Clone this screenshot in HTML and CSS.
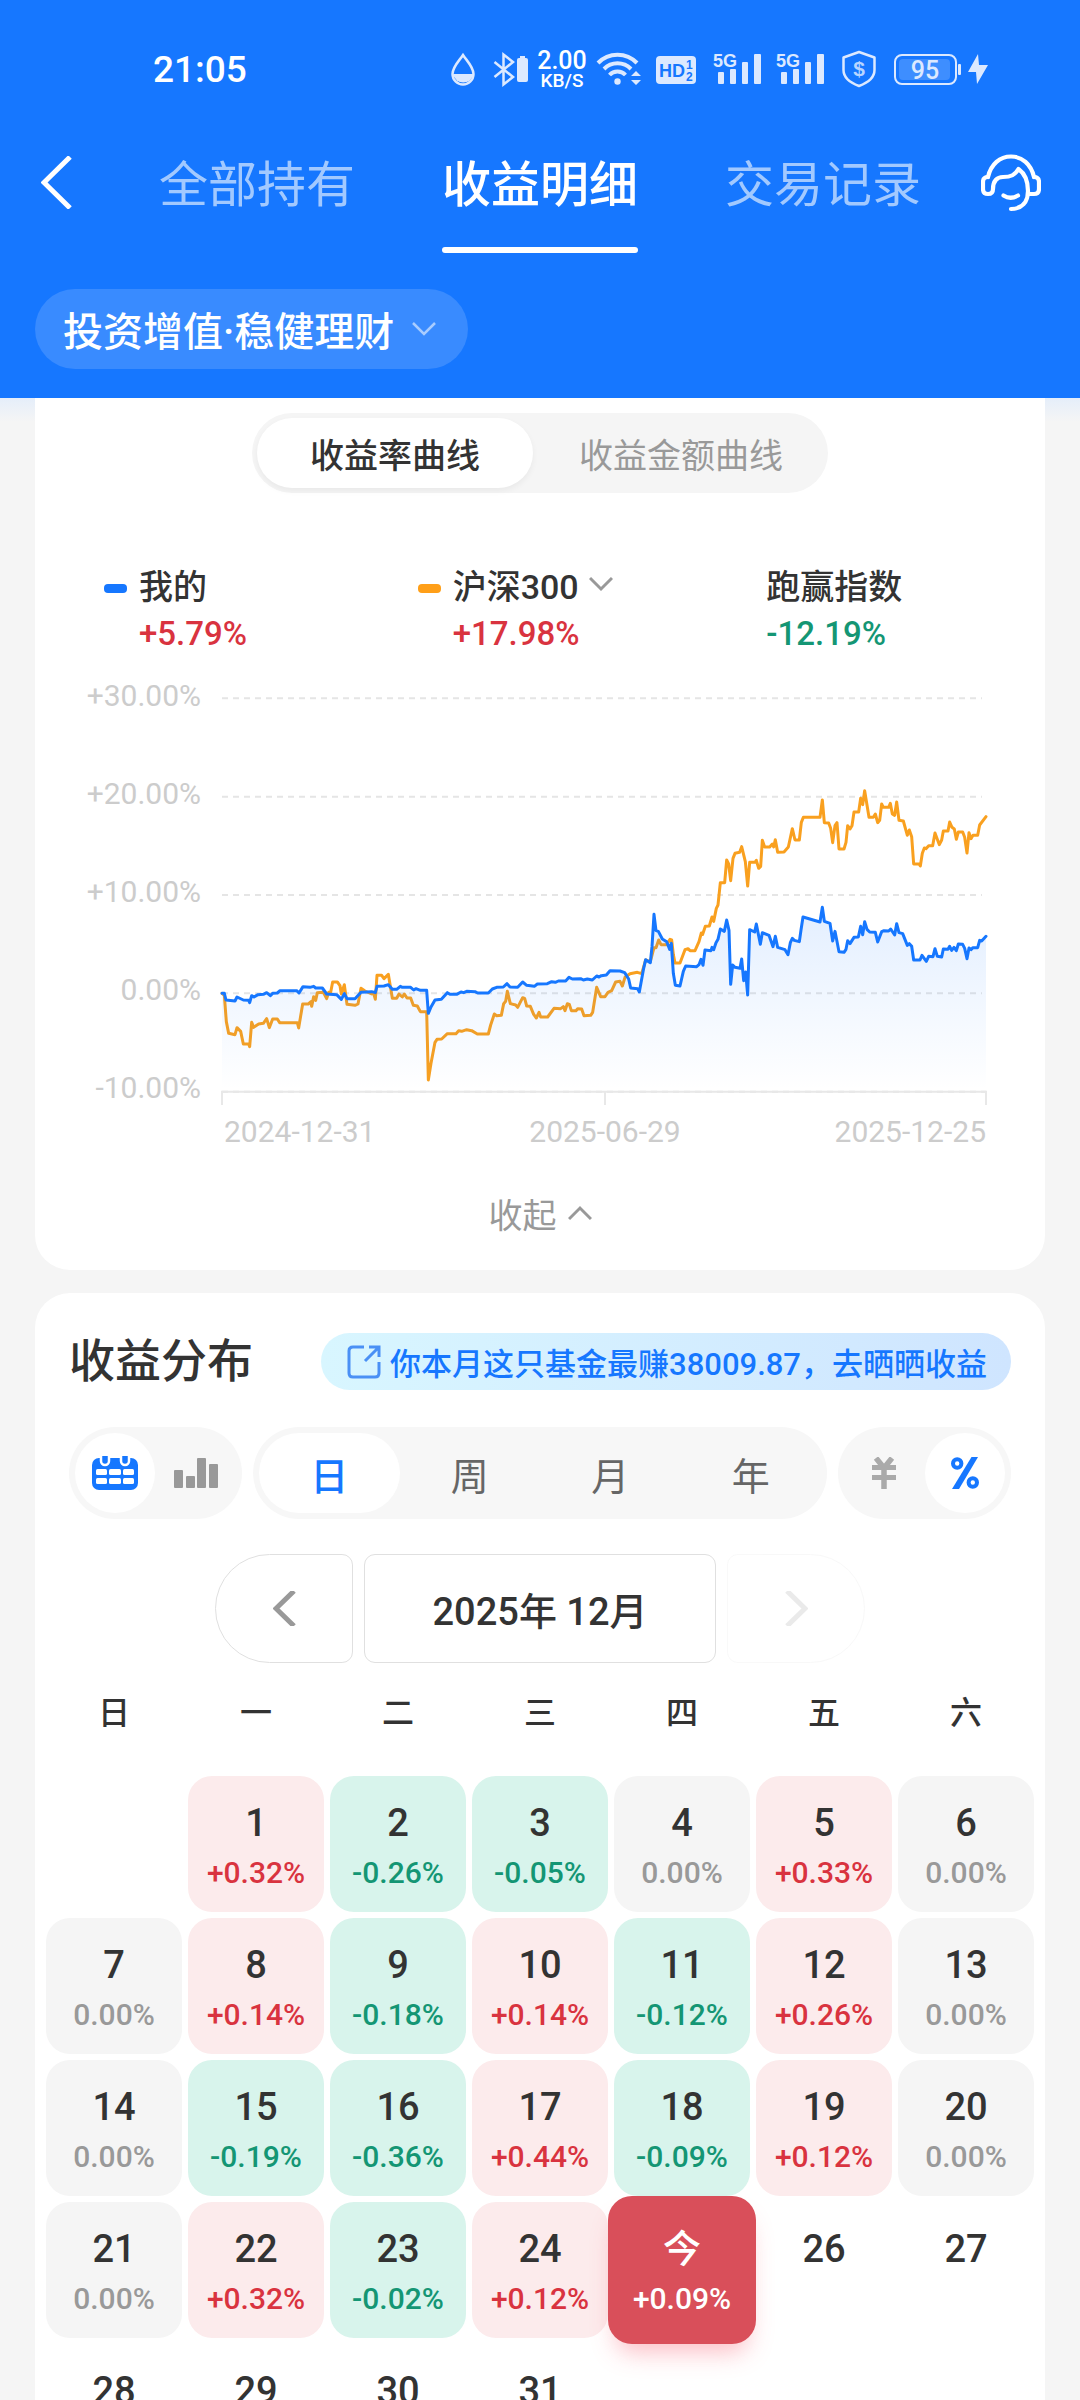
FILE: index.html
```html
<!DOCTYPE html>
<html lang="zh-CN">
<head>
  <meta charset="UTF-8">
  <title>收益明细</title>
  <meta name="viewport" content="width=device-width, initial-scale=1.0">
  <link rel="stylesheet" href="styles.css">
</head>
<body>
  <header class="header">
    <div class="status-bar">
      <span class="status-time">21:05</span>
      <div class="status-icons">
        <svg width="42" height="40" viewBox="0 0 42 40">
          <path d="M15 5C11 11 4.500 17 4.500 24a10.500 10.500 0 0 0 21 0C25.500 17 19 11 15 5z" fill="none" stroke="#dce9ff" stroke-width="2.500"/>
          <path d="M5 24h20.500a10.500 11 0 0 1-20.500 0z" fill="#dce9ff"/>
        </svg>
        <svg width="42" height="40" viewBox="0 0 42 40">
          <path d="M4.500 12l18.500 15-9.500 7.500V4.500L23 12 4.500 27" fill="none" stroke="#dce9ff" stroke-width="2.500"/>
          <rect x="27" y="8" width="11" height="24" rx="2" fill="#dce9ff"/>
          <rect x="30" y="6" width="5" height="2" fill="#dce9ff"/>
        </svg>
        <span class="net-speed"><b>2.00</b><small>KB/S</small></span>
        <svg width="56" height="40" viewBox="0 0 56 40">
          <g fill="none" stroke="#dce9ff" stroke-width="4">
            <path d="M6 13a27 27 0 0 1 39 0"/>
            <path d="M12 19a19 19 0 0 1 27 0"/>
            <path d="M17.500 25a11 11 0 0 1 16 0"/>
          </g>
          <circle cx="25.500" cy="31.500" r="3.200" fill="#dce9ff"/>
          <path d="M39 26l5-5 5 5zM39 30l5 5 5-5z" fill="#dce9ff"/>
        </svg>
        <svg width="57" height="40" viewBox="0 0 57 40">
          <rect x="8" y="6" width="40" height="28" rx="4" fill="#dce9ff"/>
          <g class="glyph" fill="#1677ff">
            <text x="11" y="27" font-size="18">HD</text>
            <text x="38" y="19" font-size="12">1</text>
            <text x="38" y="31" font-size="12">2</text>
          </g>
        </svg>
        <svg width="63" height="40" viewBox="0 0 63 40" fill="#dce9ff">
          <text class="glyph" x="8" y="17" font-size="18">5G</text>
          <rect x="13" y="22" width="6" height="12" rx="1"/>
          <rect x="25" y="19" width="6" height="15" rx="1"/>
          <rect x="37" y="12" width="6" height="22" rx="1"/>
          <rect x="49" y="4" width="7" height="30" rx="1"/>
        </svg>
        <svg width="63" height="40" viewBox="0 0 63 40" fill="#dce9ff">
          <text class="glyph" x="8" y="17" font-size="18">5G</text>
          <rect x="13" y="22" width="6" height="12" rx="1"/>
          <rect x="25" y="19" width="6" height="15" rx="1"/>
          <rect x="37" y="12" width="6" height="22" rx="1"/>
          <rect x="49" y="4" width="7" height="30" rx="1"/>
        </svg>
        <svg width="54" height="40" viewBox="0 0 54 40">
          <path d="M28 2l15.500 5.500V20c0 8-6 12.500-15.500 16C18.500 32.500 12.500 28 12.500 20V7.500z" fill="none" stroke="#dce9ff" stroke-width="2.500" stroke-linejoin="round"/>
          <text class="glyph" x="28" y="26" font-size="21" text-anchor="middle" fill="#b8d5ff">$</text>
        </svg>
        <svg width="106" height="40" viewBox="0 0 106 40">
          <rect x="10" y="5" width="61" height="29" rx="7" fill="none" stroke="#dce9ff" stroke-width="2"/>
          <rect x="14" y="9" width="51" height="21" rx="4" fill="#3e8eff"/>
          <rect x="73" y="14" width="3" height="11" rx="1" fill="#dce9ff"/>
          <text x="40" y="29" font-size="25" font-weight="500" text-anchor="middle" fill="#dce9ff">95</text>
          <path d="M93 4L83 22h8l1 12 11-19h-9z" fill="#dce9ff"/>
        </svg>
      </div>
    </div>

    <div class="nav-bar">
      <button class="icon-btn" aria-label="返回">
        <svg width="31" height="53" viewBox="0 0 31 53"><path d="M29 1L3 26.500 29 52" fill="none" stroke="#fff" stroke-width="5"/></svg>
      </button>
      <nav class="tabs">
        <a class="tab" href="#hold">全部持有</a>
        <a class="tab active" href="#detail">收益明细</a>
        <a class="tab" href="#record">交易记录</a>
      </nav>
      <button class="icon-btn" aria-label="客服">
        <svg width="60" height="58" viewBox="0 0 60 58" fill="none" stroke="#fff" stroke-width="4.200" stroke-linecap="round" stroke-linejoin="round">
          <path d="M7 23C10 10 19 2.500 30 2.500S50 10 53 23"/>
          <path d="M7 23q-5 0-5 5v7q0 5 5 5t5-5c0-8 4-12 10-12 8 0 12-2 15.500-8 7 5 9.500 12 9.500 22 0 11-6 18-17 18"/>
          <path d="M53 23q5 0 5 5v7q0 5-5 5h-6"/>
          <path d="M22.500 41.500q7 4.500 14.500 0"/>
        </svg>
      </button>
    </div>

    <button class="fund-select">
      <span>投资增值·稳健理财</span>
      <svg width="24" height="16" viewBox="0 0 24 16"><path d="M1 2l11 11L23 2" fill="none" stroke="#a8ccff" stroke-width="2.500"/></svg>
    </button>
  </header>

  <main class="content">
    <section class="card chart-card">
      <div class="curve-switch">
        <button class="curve-btn active" aria-pressed="true">收益率曲线</button>
        <button class="curve-btn" aria-pressed="false">收益金额曲线</button>
      </div>

      <div class="legend">
        <div class="legend-item">
          <div class="legend-name"><i class="mark mine"></i>我的</div>
          <div class="legend-value up">+5.79%</div>
        </div>
        <div class="legend-item">
          <button class="legend-name"><i class="mark index"></i>沪深300
            <svg width="24" height="16" viewBox="0 0 24 16"><path d="M1 2l11 11L23 2" fill="none" stroke="#999" stroke-width="3"/></svg>
          </button>
          <div class="legend-value up">+17.98%</div>
        </div>
        <div class="legend-item">
          <div class="legend-name no-mark">跑赢指数</div>
          <div class="legend-value down">-12.19%</div>
        </div>
      </div>

      <div class="chart">
        <div class="y-axis">
          <span>+30.00%</span>
          <span>+20.00%</span>
          <span>+10.00%</span>
          <span>0.00%</span>
          <span>-10.00%</span>
        </div>
        <svg class="plot" viewBox="66 -189 2292 1224" preserveAspectRatio="none">
          <defs>
            <linearGradient id="fade" gradientUnits="userSpaceOnUse" x1="0" y1="440" x2="0" y2="990">
              <stop offset="0" stop-color="#1677ff" stop-opacity=".12"/>
              <stop offset="1" stop-color="#1677ff" stop-opacity="0"/>
            </linearGradient>
          </defs>
          <g class="grid">
            <path d="M66-185H2346M66 110H2346M66 405H2346M66 700H2346M66 995H2358"/>
          </g>
          <path class="axis" d="M66 1035V995H2358V1035M1215 995V1035"/>
          <!-- 沪深300 -->
          <polyline class="line index" points="66,700 73,706 79,785 86,820 105,824 111,803 122,814 130,852 146,852 149,860 155,787 161,802 176,792 190,790 200,776 208,803 218,777 232,777 239,788 292,788 296,804 308,732 325,732 333,725 335,739 341,710 347,721 352,698 370,697 380,716 386,697 392,697 398,666 412,666 420,677 424,702 433,674 441,733 465,736 474,732 483,685 495,693 515,702 520,697 526,718 531,646 545,646 552,656 565,643 577,715 590,715 597,702 607,711 613,702 621,714 632,714 640,736 652,738 661,755 680,755 685,960 693,910 705,847 711,838 725,837 742,821 768,821 776,812 785,814 800,809 815,812 832,822 865,822 872,795 883,762 890,767 904,766 911,731 917,724 922,694 931,731 947,735 953,742 968,713 974,715 980,738 991,739 1001,763 1009,774 1017,757 1022,771 1043,771 1062,745 1082,746 1090,740 1095,752 1102,731 1108,733 1114,752 1128,752 1133,746 1145,747 1152,767 1172,766 1178,757 1190,682 1202,710 1215,710 1224,697 1235,692 1247,666 1260,664 1267,678 1275,652 1290,641 1312,637 1325,641 1337,600 1351,605 1362,563 1368,563 1376,540 1383,554 1400,554 1410,538 1415,540 1420,583 1425,609 1440,609 1455,569 1464,566 1470,572 1485,572 1497,545 1504,519 1508,523 1516,499 1528,498 1536,471 1541,484 1549,445 1554,435 1561,368 1574,368 1580,300 1586,312 1592,362 1599,295 1605,280 1619,277 1625,260 1636,305 1643,378 1649,307 1665,307 1669,301 1676,325 1682,319 1687,241 1694,261 1709,261 1717,252 1721,261 1726,239 1733,277 1752,276 1765,261 1777,206 1785,240 1798,240 1804,187 1810,172 1860,172 1867,120 1873,188 1886,189 1892,205 1898,248 1905,197 1911,188 1917,267 1932,267 1938,247 1943,197 1950,207 1956,197 1962,156 1976,156 1982,115 1988,134 1994,92 2007,172 2020,172 2026,162 2033,188 2039,181 2045,132 2050,142 2066,142 2071,130 2077,162 2084,166 2090,126 2097,181 2110,183 2122,226 2128,210 2135,230 2141,312 2157,312 2161,318 2167,280 2173,264 2178,266 2186,257 2198,257 2205,219 2218,254 2225,240 2230,213 2244,213 2249,186 2256,202 2263,207 2269,238 2275,216 2288,216 2294,232 2301,279 2307,218 2313,236 2319,226 2333,226 2339,195 2358,170"/>
          <!-- 我的 -->
          <path class="area" d="M66 990L66,700 73,700 78,720 105,723 111,711 130,720 146,721 149,728 155,707 162,711 174,704 190,703 200,698 211,707 218,700 232,699 240,692 290,692 297,699 309,680 330,682 341,679 347,684 367,684 380,702 410,704 424,718 433,701 441,716 465,716 483,697 515,695 526,698 531,679 552,678 565,674 577,688 590,688 601,679 607,682 632,682 641,690 648,686 661,691 680,691 685,760 693,741 705,720 724,718 742,698 750,703 770,703 783,696 791,698 800,694 825,695 833,699 865,699 877,687 890,682 910,681 921,671 930,681 953,682 968,666 980,676 1003,679 1012,672 1042,671 1055,665 1066,667 1075,663 1097,663 1107,652 1117,657 1142,656 1150,660 1162,657 1177,660 1190,648 1197,651 1204,647 1219,645 1230,632 1260,633 1274,638 1286,657 1292,684 1313,686 1318,696 1331,625 1337,599 1351,608 1356,560 1362,463 1368,512 1375,514 1387,537 1400,545 1409,568 1414,550 1420,640 1426,676 1440,678 1450,634 1457,618 1490,620 1497,614 1503,598 1509,616 1515,570 1533,572 1536,562 1541,569 1548,548 1554,538 1561,507 1573,514 1580,480 1587,511 1592,673 1598,615 1605,622 1620,625 1625,597 1631,662 1637,636 1643,705 1649,509 1664,516 1669,492 1681,553 1687,518 1707,526 1719,560 1726,529 1733,562 1755,569 1764,584 1771,548 1777,535 1783,541 1798,545 1803,510 1809,471 1860,486 1867,442 1873,484 1890,490 1898,543 1905,514 1917,575 1932,577 1938,568 1943,542 1950,551 1962,532 1975,531 1982,499 1988,524 1994,485 2001,508 2009,516 2026,517 2033,546 2045,515 2052,512 2066,513 2072,507 2084,525 2090,491 2097,518 2108,521 2122,556 2128,551 2135,559 2141,600 2160,600 2166,586 2179,604 2186,589 2199,590 2205,566 2212,589 2225,591 2230,567 2244,568 2249,559 2255,571 2262,562 2269,572 2275,552 2288,553 2294,565 2301,596 2307,564 2313,569 2319,563 2333,563 2339,541 2345,543 2358,529V990z"/>
          <polyline class="line mine" points="66,700 73,700 78,720 105,723 111,711 130,720 146,721 149,728 155,707 162,711 174,704 190,703 200,698 211,707 218,700 232,699 240,692 290,692 297,699 309,680 330,682 341,679 347,684 367,684 380,702 410,704 424,718 433,701 441,716 465,716 483,697 515,695 526,698 531,679 552,678 565,674 577,688 590,688 601,679 607,682 632,682 641,690 648,686 661,691 680,691 685,760 693,741 705,720 724,718 742,698 750,703 770,703 783,696 791,698 800,694 825,695 833,699 865,699 877,687 890,682 910,681 921,671 930,681 953,682 968,666 980,676 1003,679 1012,672 1042,671 1055,665 1066,667 1075,663 1097,663 1107,652 1117,657 1142,656 1150,660 1162,657 1177,660 1190,648 1197,651 1204,647 1219,645 1230,632 1260,633 1274,638 1286,657 1292,684 1313,686 1318,696 1331,625 1337,599 1351,608 1356,560 1362,463 1368,512 1375,514 1387,537 1400,545 1409,568 1414,550 1420,640 1426,676 1440,678 1450,634 1457,618 1490,620 1497,614 1503,598 1509,616 1515,570 1533,572 1536,562 1541,569 1548,548 1554,538 1561,507 1573,514 1580,480 1587,511 1592,673 1598,615 1605,622 1620,625 1625,597 1631,662 1637,636 1643,705 1649,509 1664,516 1669,492 1681,553 1687,518 1707,526 1719,560 1726,529 1733,562 1755,569 1764,584 1771,548 1777,535 1783,541 1798,545 1803,510 1809,471 1860,486 1867,442 1873,484 1890,490 1898,543 1905,514 1917,575 1932,577 1938,568 1943,542 1950,551 1962,532 1975,531 1982,499 1988,524 1994,485 2001,508 2009,516 2026,517 2033,546 2045,515 2052,512 2066,513 2072,507 2084,525 2090,491 2097,518 2108,521 2122,556 2128,551 2135,559 2141,600 2160,600 2166,586 2179,604 2186,589 2199,590 2205,566 2212,589 2225,591 2230,567 2244,568 2249,559 2255,571 2262,562 2269,572 2275,552 2288,553 2294,565 2301,596 2307,564 2313,569 2319,563 2333,563 2339,541 2345,543 2358,529"/>
        </svg>
      </div>
      <div class="x-axis">
        <span>2024-12-31</span>
        <span>2025-06-29</span>
        <span>2025-12-25</span>
      </div>

      <button class="fold-btn">收起
        <svg width="24" height="16" viewBox="0 0 24 16"><path d="M1 14L12 3l11 11" fill="none" stroke="#999" stroke-width="3"/></svg>
      </button>
    </section>

    <section class="card">
      <div class="card-head">
        <h2>收益分布</h2>
        <a class="share" href="#share">
          <svg width="34" height="34" viewBox="0 0 34 34" fill="none" stroke="#4a90f5" stroke-width="3">
            <path d="M17 2H6Q2 2 2 6v22q0 4 4 4h22q4 0 4-4V17"/>
            <path d="M22 2h10v10M32 2L18 16"/>
          </svg>
          <span>你本月这只基金最赚38009.87，去晒晒收益</span>
        </a>
      </div>

      <div class="filters">
        <div class="seg">
          <button class="seg-btn round active" aria-label="日历" aria-pressed="true">
            <svg width="46" height="34" viewBox="0 0 46 34">
              <rect x="0" y="2" width="46" height="32" rx="7" fill="#1677ff"/>
              <path d="M9 0v5a4 4 0 0 0 8 0V0M29 0v5a4 4 0 0 0 8 0V0" fill="#1677ff" stroke="#fff" stroke-width="2.500"/>
              <g fill="#fff">
                <rect x="4" y="13" width="11" height="6" rx="1.500"/><rect x="17" y="13" width="12" height="6" rx="1.500"/><rect x="31" y="13" width="11" height="6" rx="1.500"/>
                <rect x="4" y="22" width="11" height="6" rx="1.500"/><rect x="17" y="22" width="12" height="6" rx="1.500"/><rect x="31" y="22" width="11" height="6" rx="1.500"/>
              </g>
            </svg>
          </button>
          <button class="seg-btn round" aria-label="柱状图" aria-pressed="false">
            <svg width="44" height="30" viewBox="0 0 44 30" fill="#999">
              <rect x="0" y="12" width="9" height="18" rx="1"/><rect x="12" y="18" width="9" height="12" rx="1"/><rect x="23" y="0" width="9" height="30" rx="1"/><rect x="35" y="6" width="9" height="24" rx="1"/>
            </svg>
          </button>
        </div>
        <div class="seg period">
          <button class="seg-btn active" aria-pressed="true">日</button>
          <button class="seg-btn" aria-pressed="false">周</button>
          <button class="seg-btn" aria-pressed="false">月</button>
          <button class="seg-btn" aria-pressed="false">年</button>
        </div>
        <div class="seg">
          <button class="seg-btn round" aria-label="金额" aria-pressed="false">
            <svg width="24" height="32" viewBox="0 0 24 32" fill="none" stroke="#aaa">
              <path d="M4 1l8 10 8-10M12 10v22" stroke-width="5.500"/>
              <path d="M0 10.500h24M0 20.500h24" stroke-width="5"/>
            </svg>
          </button>
          <button class="seg-btn round active" aria-label="收益率" aria-pressed="true">
            <svg width="28" height="32" viewBox="0 0 28 32" fill="none" stroke="#1677ff">
              <circle cx="6.200" cy="6.500" r="4.200" stroke-width="4"/>
              <circle cx="21.800" cy="25.500" r="4.200" stroke-width="4"/>
              <path d="M20.500 0H27L8 32H1z" fill="#1677ff" stroke="none"/>
            </svg>
          </button>
        </div>
      </div>

      <div class="month-nav">
        <button class="month-btn prev" aria-label="上个月">
          <svg width="23" height="35" viewBox="0 0 23 35"><path d="M21 0L3 17.500 21 35" fill="none" stroke="#999" stroke-width="5"/></svg>
        </button>
        <button class="month-btn current">2025年 12月</button>
        <button class="month-btn next" aria-label="下个月" disabled>
          <svg width="23" height="35" viewBox="0 0 23 35"><path d="M2 0l18 17.500L2 35" fill="none" stroke="#999" stroke-width="5"/></svg>
        </button>
      </div>

      <table class="calendar">
        <thead>
          <tr><th>日</th><th>一</th><th>二</th><th>三</th><th>四</th><th>五</th><th>六</th></tr>
        </thead>
        <tbody>
          <tr>
            <td></td>
            <td><div class="day up"><b>1</b><span>+0.32%</span></div></td>
            <td><div class="day down"><b>2</b><span>-0.26%</span></div></td>
            <td><div class="day down"><b>3</b><span>-0.05%</span></div></td>
            <td><div class="day flat"><b>4</b><span>0.00%</span></div></td>
            <td><div class="day up"><b>5</b><span>+0.33%</span></div></td>
            <td><div class="day flat"><b>6</b><span>0.00%</span></div></td>
          </tr>
          <tr>
            <td><div class="day flat"><b>7</b><span>0.00%</span></div></td>
            <td><div class="day up"><b>8</b><span>+0.14%</span></div></td>
            <td><div class="day down"><b>9</b><span>-0.18%</span></div></td>
            <td><div class="day up"><b>10</b><span>+0.14%</span></div></td>
            <td><div class="day down"><b>11</b><span>-0.12%</span></div></td>
            <td><div class="day up"><b>12</b><span>+0.26%</span></div></td>
            <td><div class="day flat"><b>13</b><span>0.00%</span></div></td>
          </tr>
          <tr>
            <td><div class="day flat"><b>14</b><span>0.00%</span></div></td>
            <td><div class="day down"><b>15</b><span>-0.19%</span></div></td>
            <td><div class="day down"><b>16</b><span>-0.36%</span></div></td>
            <td><div class="day up"><b>17</b><span>+0.44%</span></div></td>
            <td><div class="day down"><b>18</b><span>-0.09%</span></div></td>
            <td><div class="day up"><b>19</b><span>+0.12%</span></div></td>
            <td><div class="day flat"><b>20</b><span>0.00%</span></div></td>
          </tr>
          <tr>
            <td><div class="day flat"><b>21</b><span>0.00%</span></div></td>
            <td><div class="day up"><b>22</b><span>+0.32%</span></div></td>
            <td><div class="day down"><b>23</b><span>-0.02%</span></div></td>
            <td><div class="day up"><b>24</b><span>+0.12%</span></div></td>
            <td><div class="day today"><b>今</b><span>+0.09%</span></div></td>
            <td><div class="day"><b>26</b></div></td>
            <td><div class="day"><b>27</b></div></td>
          </tr>
          <tr>
            <td><div class="day"><b>28</b></div></td>
            <td><div class="day"><b>29</b></div></td>
            <td><div class="day"><b>30</b></div></td>
            <td><div class="day"><b>31</b></div></td>
            <td></td>
            <td></td>
            <td></td>
          </tr>
        </tbody>
      </table>
    </section>
  </main>
</body>
</html>
```
FILE: styles.css
```css
* {
  box-sizing: border-box;
}
html, body {
  height: 100%;
  margin: 0;
}
body {
  display: flex;
  flex-direction: column;
  font-family: Roboto, "Noto Sans CJK SC", sans-serif;
  font-size: 34px;
  color: #333;
  background: #f5f5f5;
}
button {
  font: inherit;
  color: inherit;
  background: none;
  border: none;
  padding: 0;
  margin: 0;
  cursor: pointer;
}
a {
  color: inherit;
  text-decoration: none;
}
svg {
  display: block;
  flex: none;
}

/* Header */
.header {
  flex: none;
  background: #1677ff;
  color: #fff;
  padding-bottom: 29px;
}
.status-bar {
  display: flex;
  justify-content: space-between;
  height: 116px;
  padding: 50px 89px 0 153px;
}
.status-time {
  font-size: 37px;
  line-height: 40px;
  font-weight: 500;
}
.status-icons {
  display: flex;
  height: 40px;
}
.glyph {
  font-family: "Liberation Sans", sans-serif;
  font-weight: bold;
}
.net-speed {
  display: flex;
  flex-direction: column;
  align-items: center;
  width: 60px;
}
.net-speed b {
  font-size: 25px;
  line-height: 22px;
  font-weight: 500;
}
.net-speed small {
  font-size: 19px;
  line-height: 18px;
  font-weight: 500;
}
.nav-bar {
  display: flex;
  align-items: center;
  height: 137px;
  padding: 0 39px 0 41px;
}
.icon-btn {
  padding-bottom: 4px;
}
.tabs {
  flex: 1;
  display: flex;
  justify-content: space-between;
  align-self: stretch;
  margin: 0 60px 0 87px;
}
.tab {
  position: relative;
  display: flex;
  align-items: center;
  padding-bottom: 8px;
  font-size: 49px;
  color: #a2c9ff;
}
.tab.active {
  color: #fff;
  font-weight: 500;
}
.tab.active::after {
  content: "";
  position: absolute;
  left: 0;
  right: 0;
  bottom: 0;
  height: 6px;
  border-radius: 3px;
  background: #fff;
}
.fund-select {
  display: flex;
  align-items: center;
  gap: 18px;
  height: 80px;
  margin: 36px 0 0 35px;
  padding: 0 32px 0 28px;
  border-radius: 40px;
  background: #398bff;
  font-size: 40px;
  font-weight: 500;
}

/* Scroll area */
.content {
  flex: 1;
  min-height: 0;
  overflow-y: auto;
  scrollbar-width: none;
  padding: 0 35px;
  background: linear-gradient(#e5eefa, #f5f5f5 24px);
}
.card {
  background: #fff;
  border-radius: 35px;
  margin-bottom: 23px;
  padding-top: 38px;
}
.chart-card {
  border-radius: 0 0 35px 35px;
  padding: 15px 0 30px;
}
.up {
  color: #d9333f;
}
.down {
  color: #149674;
}

/* Curve switch */
.curve-switch {
  display: flex;
  width: fit-content;
  margin: 0 auto;
  padding: 5px;
  border-radius: 40px;
  background: #f5f5f5;
}
.curve-btn {
  height: 70px;
  padding: 0 40px 0 46px;
  border-radius: 35px;
  color: #999;
}
.curve-btn.active {
  padding: 0 53px;
  background: #fff;
  color: #333;
  font-weight: 500;
  box-shadow: 0 3px 6px rgba(0, 0, 0, 0.05);
}

/* Legend */
.legend {
  display: grid;
  grid-template-columns: repeat(3, 1fr);
  margin-top: 66px;
  padding-left: 69px;
}
.legend-name {
  display: flex;
  align-items: center;
  height: 50px;
  font-weight: 500;
}
.legend-name svg {
  margin-left: 10px;
}
.mark {
  width: 23px;
  height: 9px;
  margin: 8px 12px 0 0;
  border-radius: 4px;
}
.mark.mine {
  background: #1677ff;
}
.mark.index {
  background: #ff9f18;
}
.no-mark,
.legend-value {
  padding-left: 35px;
}
.legend-value {
  font-size: 33px;
  line-height: 50px;
  font-weight: 500;
}

/* Chart */
.chart {
  display: flex;
  margin-top: 19px;
  padding-right: 59px;
}
.y-axis {
  display: flex;
  flex-direction: column;
  justify-content: space-between;
  width: 187px;
  height: 428px;
  padding-right: 21px;
  text-align: right;
  font-size: 30px;
  line-height: 36px;
  color: #ccc;
}
.plot {
  flex: 1;
  min-width: 0;
  height: 408px;
  margin-top: 19px;
  overflow: visible;
}
.plot path,
.plot polyline {
  fill: none;
  vector-effect: non-scaling-stroke;
}
.grid path {
  stroke: #e5e5e5;
  stroke-width: 2;
  stroke-dasharray: 6 5;
}
.axis {
  stroke: #e8e8e8;
  stroke-width: 2;
}
.plot .area {
  fill: url(#fade);
}
.line {
  stroke-width: 3;
  stroke-linejoin: round;
  stroke-linecap: round;
}
.line.index {
  stroke: #f9a01f;
}
.line.mine {
  stroke: #1677ff;
}
.x-axis {
  display: flex;
  justify-content: space-between;
  margin: 8px 59px 0 189px;
  font-size: 30px;
  line-height: 36px;
  color: #ccc;
}
.fold-btn {
  display: flex;
  align-items: center;
  gap: 11px;
  height: 50px;
  margin: 38px auto 2px;
  color: #999;
}

/* Distribution card */
.card-head {
  display: flex;
  justify-content: space-between;
  align-items: center;
  height: 61px;
  padding: 0 34px;
}
.card-head h2 {
  margin: 0;
  font-size: 46px;
  line-height: 61px;
  font-weight: 500;
}
.share {
  display: flex;
  align-items: center;
  gap: 9px;
  height: 57px;
  padding: 0 24px 0 26px;
  border-radius: 29px;
  background: linear-gradient(90deg, #d8f6ff, #cfe5ff);
  color: #1677ff;
  font-size: 31px;
  font-weight: 500;
}
.filters {
  display: flex;
  gap: 11px;
  margin-top: 35px;
  padding: 0 34px;
}
.seg {
  display: flex;
  justify-content: space-between;
  flex: none;
  width: 173px;
  padding: 6px;
  border-radius: 46px;
  background: #f7f7f7;
}
.seg.period {
  flex: 1;
}
.seg-btn {
  display: flex;
  align-items: center;
  justify-content: center;
  flex: 1;
  height: 80px;
  border-radius: 40px;
  font-size: 38px;
  color: #666;
}
.seg-btn.round {
  flex: none;
  width: 80px;
}
.seg-btn.active {
  background: #fff;
  color: #1677ff;
  font-weight: 500;
}
.month-nav {
  display: flex;
  justify-content: center;
  gap: 11px;
  margin-top: 35px;
}
.month-btn {
  display: flex;
  align-items: center;
  justify-content: center;
  width: 138px;
  height: 109px;
  border: 1px solid #e0e0e0;
  border-radius: 11px;
}
.month-btn.prev {
  border-radius: 55px 11px 11px 55px;
}
.month-btn.current {
  width: 352px;
  font-size: 38px;
  font-weight: 500;
}
.month-btn.next {
  border-radius: 11px 55px 55px 11px;
  opacity: 0.2;
}

/* Calendar */
.calendar {
  width: calc(100% - 10px);
  margin: 0 5px;
  table-layout: fixed;
  border-collapse: separate;
  border-spacing: 6px;
}
.calendar th {
  padding: 19px 0 32px;
  line-height: 50px;
  font-weight: 500;
  font-size: 32px;
}
.calendar td {
  height: 136px;
  padding: 0;
}
.day {
  display: flex;
  flex-direction: column;
  align-items: center;
  height: 136px;
  padding-top: 22px;
  border-radius: 24px;
}
.day b {
  font-size: 38px;
  line-height: 50px;
  font-weight: 500;
  color: #333;
}
.day span {
  font-size: 30px;
  line-height: 50px;
  font-weight: 500;
}
.day.up {
  background: #fcebec;
}
.day.down {
  background: #d8f4ec;
}
.day.flat {
  background: #f5f5f5;
  color: #999;
}
.day.today {
  position: relative;
  height: 148px;
  margin: -6px;
  padding-top: 28px;
  background: #d94f5a;
  color: #fff;
  box-shadow: 0 16px 24px -8px rgba(245, 70, 90, 0.35);
}
.day.today b {
  color: #fff;
}
```
